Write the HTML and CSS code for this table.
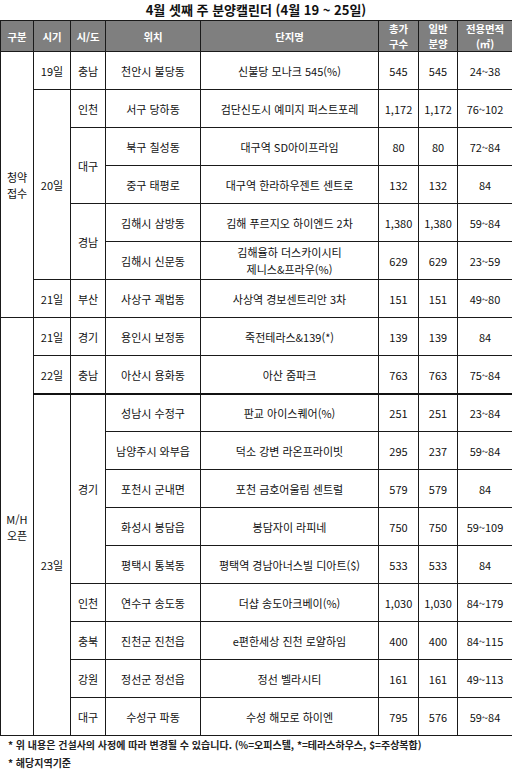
FILE: index.html
```html
<!DOCTYPE html>
<html lang="ko">
<head>
<meta charset="utf-8">
<title>4월 셋째 주 분양캘린더</title>
<link rel="stylesheet" href="styles.css">
</head>
<body>
<div class="page">
  <h1 class="title">4월 셋째 주 분양캘린더 (4월 19 ~ 25일)</h1>
  <table class="cal">
    <colgroup>
      <col class="c1"><col class="c2"><col class="c3"><col class="c4"><col class="c5"><col class="c6"><col class="c7"><col class="c8">
    </colgroup>
    <thead>
      <tr>
        <th>구분</th><th>시기</th><th>시/도</th><th>위치</th><th>단지명</th><th>총가<br>구수</th><th>일반<br>분양</th><th>전용면적<br>(㎡)</th>
      </tr>
    </thead>
    <tbody>
      <tr><td rowspan="7">청약<br>접수</td><td>19일</td><td>충남</td><td>천안시 불당동</td><td>신불당 모나크 545(%)</td><td>545</td><td>545</td><td>24~38</td></tr>
      <tr><td rowspan="5">20일</td><td>인천</td><td>서구 당하동</td><td>검단신도시 예미지 퍼스트포레</td><td>1,172</td><td>1,172</td><td>76~102</td></tr>
      <tr><td rowspan="2">대구</td><td>북구 칠성동</td><td>대구역 SD아이프라임</td><td>80</td><td>80</td><td>72~84</td></tr>
      <tr><td>중구 태평로</td><td>대구역 한라하우젠트 센트로</td><td>132</td><td>132</td><td>84</td></tr>
      <tr><td rowspan="2">경남</td><td>김해시 삼방동</td><td>김해 푸르지오 하이엔드 2차</td><td>1,380</td><td>1,380</td><td>59~84</td></tr>
      <tr><td>김해시 신문동</td><td class="two">김해율하 더스카이시티<br>제니스&amp;프라우(%)</td><td>629</td><td>629</td><td>23~59</td></tr>
      <tr><td>21일</td><td>부산</td><td>사상구 괘법동</td><td>사상역 경보센트리안 3차</td><td>151</td><td>151</td><td>49~80</td></tr>
      <tr><td rowspan="11">M/H<br>오픈</td><td>21일</td><td>경기</td><td>용인시 보정동</td><td>죽전테라스&amp;139(*)</td><td>139</td><td>139</td><td>84</td></tr>
      <tr><td>22일</td><td>충남</td><td>아산시 용화동</td><td>아산 줌파크</td><td>763</td><td>763</td><td>75~84</td></tr>
      <tr class="thick"><td rowspan="9">23일</td><td rowspan="5">경기</td><td>성남시 수정구</td><td>판교 아이스퀘어(%)</td><td>251</td><td>251</td><td>23~84</td></tr>
      <tr><td>남양주시 와부읍</td><td>덕소 강변 라온프라이빗</td><td>295</td><td>237</td><td>59~84</td></tr>
      <tr><td>포천시 군내면</td><td>포천 금호어울림 센트럴</td><td>579</td><td>579</td><td>84</td></tr>
      <tr><td>화성시 봉담읍</td><td>봉담자이 라피네</td><td>750</td><td>750</td><td>59~109</td></tr>
      <tr><td>평택시 통복동</td><td>평택역 경남아너스빌 디아트($)</td><td>533</td><td>533</td><td>84</td></tr>
      <tr><td>인천</td><td>연수구 송도동</td><td>더샵 송도아크베이(%)</td><td>1,030</td><td>1,030</td><td>84~179</td></tr>
      <tr><td>충북</td><td>진천군 진천읍</td><td>e편한세상 진천 로얄하임</td><td>400</td><td>400</td><td>84~115</td></tr>
      <tr><td>강원</td><td>정선군 정선읍</td><td>정선 벨라시티</td><td>161</td><td>161</td><td>49~113</td></tr>
      <tr><td>대구</td><td>수성구 파동</td><td>수성 해모로 하이엔</td><td>795</td><td>576</td><td>59~84</td></tr>
    </tbody>
  </table>
  <div class="notes">
    <p>* 위 내용은 건설사의 사정에 따라 변경될 수 있습니다. (%=오피스텔, *=테라스하우스, $=주상복합)</p>
    <p>* 해당지역기준</p>
  </div>
</div>
</body>
</html>
```
FILE: styles.css
```css
html, body {
  margin: 0;
  padding: 0;
  background: #ffffff;
}
.page {
  width: 512px;
  font-family: "Noto Sans CJK KR", "Noto Sans", sans-serif;
  color: #111111;
}
.title {
  margin: 0;
  height: 20px;
  line-height: 20px;
  font-size: 13px;
  font-weight: bold;
  text-align: center;
  color: #111111;
}
.cal {
  width: 512px;
  border-collapse: collapse;
  table-layout: fixed;
}
.c1 { width: 33px; }
.c2 { width: 37px; }
.c3 { width: 35px; }
.c4 { width: 95px; }
.c5 { width: 178px; }
.c6 { width: 40px; }
.c7 { width: 39px; }
.c8 { width: 55px; }
.cal th {
  background: #7f7f7f;
  color: #ffffff;
  font-weight: bold;
  font-size: 10.4px;
  line-height: 15px;
  height: 29px;
  padding: 0;
  border: 1px solid #1a1a1a;
  text-align: center;
  vertical-align: middle;
}
.cal td {
  height: 37px;
  padding: 0;
  border: 1px solid #1a1a1a;
  font-size: 11px;
  line-height: 16px;
  text-align: center;
  vertical-align: middle;
  white-space: nowrap;
}
.cal tr.thick td {
  border-top: 2px solid #111111;
  height: 36px;
}
.cal td.two {
  line-height: 17px;
}
.notes {
  padding-left: 8px;
}
.notes p {
  margin: 0;
  height: 18px;
  line-height: 18px;
  font-size: 10px;
  font-weight: bold;
  color: #222222;
}
```
